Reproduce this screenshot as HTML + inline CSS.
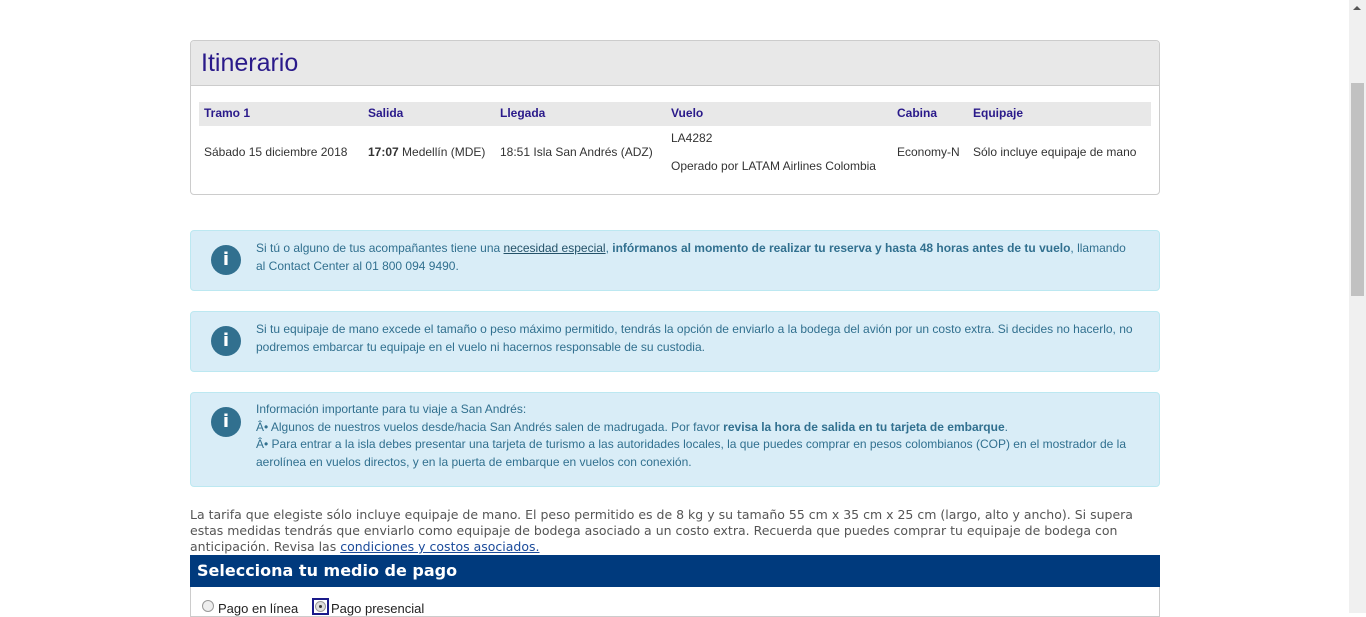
<!DOCTYPE html>
<html><head><meta charset="utf-8"><style>
*{margin:0;padding:0;box-sizing:border-box}
body{width:1366px;height:613px;overflow:hidden;background:#fff;font-family:"Liberation Sans",Arial,sans-serif;position:relative;color:#333}
.abs{position:absolute}
.panel{left:190px;top:40px;width:970px;height:155px;border:1px solid #ccc;border-radius:4px;overflow:hidden}
.ph{height:45px;background:#e8e8e8;border-bottom:1px solid #ccc;padding-left:10px;font-size:25px;color:#2a1a8a;line-height:45px}
.th{position:absolute;top:61px;left:8px;width:952px;height:24px;background:#e8e8e8}
.t{position:absolute;font-size:12px;color:#333;white-space:nowrap}
.h{font-weight:bold;color:#2a1a8a}
.info{left:190px;width:970px;background:#d9edf7;border:1px solid #bce8f1;border-radius:4px}
.ic{position:absolute;left:20px;width:30px;height:30px;border-radius:50%;background:#31708f;color:#fff;font-weight:bold;font-size:18px;text-align:center;line-height:30px;font-family:"DejaVu Sans",sans-serif}
.it{position:absolute;left:65px;right:22px;font-size:12px;line-height:18px;color:#31708f}
.it a{color:#245269;text-decoration:underline}
.para{left:190px;top:507px;width:960px;font-family:"DejaVu Sans",Verdana,sans-serif;font-size:12.5px;line-height:16px;color:#555}
.para a{color:#1a4a9a;text-decoration:underline}
.bar{left:190px;top:555px;width:970px;height:32px;background:#003a7d;color:#fff;font-family:"DejaVu Sans",Verdana,sans-serif;font-weight:bold;font-size:16px;line-height:32px;padding-left:7px}
.low{left:190px;top:587px;width:970px;height:30px;border:1px solid #ccc;border-top:none}
.sb{left:1349px;top:0;width:17px;height:613px;background:#f0f0f0}
</style></head><body>
<div class="abs panel">
<div class="ph">Itinerario</div>
<div class="th"></div>
<div class="t h" style="left:13px;top:65px">Tramo 1</div>
<div class="t h" style="left:177px;top:65px">Salida</div>
<div class="t h" style="left:309px;top:65px">Llegada</div>
<div class="t h" style="left:480px;top:65px">Vuelo</div>
<div class="t h" style="left:706px;top:65px">Cabina</div>
<div class="t h" style="left:782px;top:65px">Equipaje</div>
<div class="t" style="left:13px;top:104px">Sábado 15 diciembre 2018</div>
<div class="t" style="left:177px;top:104px"><b>17:07</b> Medellín (MDE)</div>
<div class="t" style="left:309px;top:104px">18:51 Isla San Andrés (ADZ)</div>
<div class="t" style="left:480px;top:90px">LA4282</div>
<div class="t" style="left:480px;top:118px">Operado por LATAM Airlines Colombia</div>
<div class="t" style="left:706px;top:104px">Economy-N</div>
<div class="t" style="left:782px;top:104px">Sólo incluye equipaje de mano</div>
</div>

<div class="abs info" style="top:230px;height:61px"><div class="ic" style="top:14px">i</div>
<div class="it" style="top:8px;right:30px">Si tú o alguno de tus acompañantes tiene una <a>necesidad especial</a>, <b>infórmanos al momento de realizar tu reserva y hasta 48 horas antes de tu vuelo</b>, llamando al Contact Center al 01 800 094 9490.</div></div>

<div class="abs info" style="top:311px;height:61px"><div class="ic" style="top:14px">i</div>
<div class="it" style="top:8px">Si tu equipaje de mano excede el tamaño o peso máximo permitido, tendrás la opción de enviarlo a la bodega del avión por un costo extra. Si decides no hacerlo, no podremos embarcar tu equipaje en el vuelo ni hacernos responsable de su custodia.</div></div>

<div class="abs info" style="top:392px;height:95px"><div class="ic" style="top:14px">i</div>
<div class="it" style="top:8px;line-height:17.5px">Información importante para tu viaje a San Andrés:<br>Â• Algunos de nuestros vuelos desde/hacia San Andrés salen de madrugada. Por favor <b>revisa la hora de salida en tu tarjeta de embarque</b>.<br>Â• Para entrar a la isla debes presentar una tarjeta de turismo a las autoridades locales, la que puedes comprar en pesos colombianos (COP) en el mostrador de la aerolínea en vuelos directos, y en la puerta de embarque en vuelos con conexión.</div></div>

<div class="abs para">La tarifa que elegiste sólo incluye equipaje de mano. El peso permitido es de 8 kg y su tamaño 55 cm x 35 cm x 25 cm (largo, alto y ancho). Si supera estas medidas tendrás que enviarlo como equipaje de bodega asociado a un costo extra. Recuerda que puedes comprar tu equipaje de bodega con anticipación. Revisa las <a>condiciones y costos asociados.</a></div>
<div class="abs bar">Selecciona tu medio de pago</div>
<div class="abs low"></div>
<div class="abs" style="left:202px;top:600px;width:12px;height:12px;border-radius:50%;border:1px solid #999;background:#eee"></div>
<div class="abs" style="left:218px;top:601px;font-size:13px;color:#222">Pago en línea</div>
<div class="abs" style="left:312px;top:598px;width:17px;height:17px;border:2px solid #1a1a8a"></div>
<div class="abs" style="left:315px;top:601px;width:11px;height:11px;border-radius:50%;border:1px solid #999;background:#ddd"><div style="margin:3px;width:3px;height:3px;border-radius:50%;background:#333"></div></div>
<div class="abs" style="left:331px;top:601px;font-size:13px;color:#222">Pago presencial</div>

<div class="abs sb"></div>
<div class="abs" style="left:1353px;top:6px;width:0;height:0;border-left:4px solid transparent;border-right:4px solid transparent;border-bottom:4px solid #555"></div>
<div class="abs" style="left:1351px;top:83px;width:13px;height:213px;background:#c1c1c1"></div>
</body></html>
